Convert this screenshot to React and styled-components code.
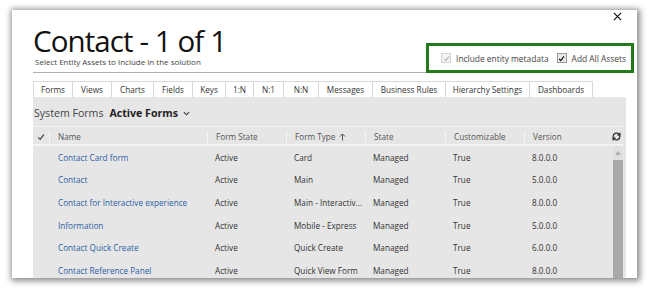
import React from 'react'
import styled, { createGlobalStyle } from 'styled-components'

const Global = createGlobalStyle`
    html, body {
        margin: 0;
        padding: 0;
        background: #fff;
        font-family: "Open Sans", "Noto Sans", sans-serif;
    }
`

const Page = styled.div`
    width: 650px;
    height: 288px;
    padding: 10px 13px 0 12px;
    box-sizing: border-box;
    overflow: hidden;
`

const Window = styled.section`
    height: 268px;
    background: #fff;
    box-shadow: 1px 1px 6px 2px rgba(0, 0, 0, 0.45);
    padding: 0 11px 0 21px;
    box-sizing: border-box;
    display: flex;
    flex-direction: column;
    overflow: hidden;
`

const TopBar = styled.div`
    display: flex;
    justify-content: flex-end;
    height: 12px;
    padding-top: 2px;
    margin-right: 3px;
`

const CloseButton = styled.button`
    border: 0;
    background: none;
    padding: 0;
    width: 10px;
    height: 10px;
    display: flex;
`

const Heading = styled.header`
    display: flex;
    justify-content: space-between;
    align-items: flex-end;
    border-bottom: 1px solid #b0b0b0;
    height: 48px;
    flex-shrink: 0;
`

const TitleBlock = styled.div`
    display: flex;
    flex-direction: column;
    padding-bottom: 5px;
`

const Title = styled.h1`
    margin: 0;
    font-size: 29.5px;
    line-height: 30px;
    letter-spacing: -0.9px;
    font-weight: 400;
    color: #111;
`

const Subtitle = styled.p`
    margin: 1px 0 0 2px;
    font-size: 8px;
    line-height: 10px;
    color: #444;
`

const Highlight = styled.div`
    display: flex;
    align-items: center;
    gap: 5px;
    border: 3px solid #237a1c;
    height: 24px;
    padding: 0 5px 0 12px;
    margin: 0 -8px -1px 0;
    font-size: 8.4px;
    color: #444;
`

const Check = styled.span`
    width: 8px;
    height: 8px;
    border: 1px solid ${({ disabled }) => disabled ? '#d4d4d4' : '#999'};
    background: ${({ disabled }) => disabled ? '#f4f4f4' : '#e8e8e8'};
    display: flex;
    align-items: center;
    justify-content: center;
    margin-left: ${({ gap }) => gap || 0}px;
`

const Tabs = styled.nav`
    display: flex;
    margin-top: 8px;
    height: 16px;
    flex-shrink: 0;
`

const Tab = styled.div`
    height: 16px;
    width: ${({ w }) => w}px;
    box-sizing: border-box;
    border: 1px solid #d8d8d8;
    border-left: ${({ first }) => first ? '1px solid #d8d8d8' : '0'};
    border-bottom: 0;
    font-size: 8.2px;
    color: #333;
    display: flex;
    align-items: center;
    justify-content: center;
    white-space: nowrap;
`

const Content = styled.div`
    flex: 1;
    background: #e6e6e6;
    display: flex;
    flex-direction: column;
    padding-right: 3px;
    min-height: 0;
`

const ViewBar = styled.div`
    height: 26px;
    padding: 3px 0 0 1px;
    flex-shrink: 0;
    display: flex;
    align-items: center;
    gap: 6px;
    font-size: 10.6px;
    color: #444;
`

const ViewName = styled.span`
    font-weight: 700;
    color: #222;
    display: flex;
    align-items: center;
    gap: 5px;
`

const cols = '16px 158px 79px 79px 80px 79px 1fr'

const HeaderRow = styled.div`
    display: grid;
    grid-template-columns: ${cols} 14px;
    height: 15px;
    padding-top: 2px;
    flex-shrink: 0;
    border-top: 1px solid #f2f2f2;
    border-bottom: 2px solid #f4f4f4;
    align-items: center;
    font-size: 8.2px;
    color: #555;
`

const HeadCell = styled.div`
    height: 12px;
    display: flex;
    align-items: center;
    border-left: ${({ first }) => first ? '0' : '1px solid #f6f6f6'};
    gap: 4px;
    justify-content: ${({ center }) => center ? 'center' : 'flex-start'};
    padding-left: ${({ center }) => center ? '0' : '8px'};
`

const Body = styled.div`
    flex: 1;
    display: flex;
    min-height: 0;
`

const Rows = styled.div`
    flex: 1;
`

const Row = styled.div`
    display: grid;
    grid-template-columns: ${cols};
    height: 22.6px;
    align-items: center;
    font-size: 8.2px;
    color: #333;
`

const Cell = styled.div`
    padding-left: ${({ link }) => link ? 9 : 8}px;
    color: ${({ link }) => link ? '#2d5ea6' : '#333'};
    white-space: nowrap;
    overflow: hidden;
`

const Scrollbar = styled.div`
    width: 10px;
    display: flex;
    flex-direction: column;
    background: #e0e0e0;
`

const ScrollArrow = styled.div`
    height: 14px;
    display: flex;
    align-items: center;
    justify-content: center;
`

const Thumb = styled.div`
    flex: 1;
    background: #a9a9a9;
`

const tabs = [
    ['Forms', 40], ['Views', 39], ['Charts', 42], ['Fields', 39], ['Keys', 33],
    ['1:N', 28], ['N:1', 30], ['N:N', 35], ['Messages', 54], ['Business Rules', 73],
    ['Hierarchy Settings', 84], ['Dashboards', 63]
]

const forms = [
    ['Contact Card form', 'Active', 'Card', 'Managed', 'True', '8.0.0.0'],
    ['Contact', 'Active', 'Main', 'Managed', 'True', '5.0.0.0'],
    ['Contact for Interactive experience', 'Active', 'Main - Interactiv...', 'Managed', 'True', '8.0.0.0'],
    ['Information', 'Active', 'Mobile - Express', 'Managed', 'True', '5.0.0.0'],
    ['Contact Quick Create', 'Active', 'Quick Create', 'Managed', 'True', '6.0.0.0'],
    ['Contact Reference Panel', 'Active', 'Quick View Form', 'Managed', 'True', '8.0.0.0']
]

const Tick = ({ color = '#222', size = 7 }) => (
    <svg width={size} height={size} viewBox="0 0 10 10">
        <polyline points="1.5,5.5 4,8 8.5,2" fill="none" stroke={color} strokeWidth="1.6" />
    </svg>
)

const App = () => (
    <Page>
        <Global />
        <Window>
            <TopBar>
                <CloseButton>
                    <svg width="9" height="9" viewBox="0 0 10 10">
                        <path d="M1 1 L9 9 M9 1 L1 9" stroke="#111" strokeWidth="1.3" />
                    </svg>
                </CloseButton>
            </TopBar>
            <Heading>
                <TitleBlock>
                    <Title>Contact - 1 of 1</Title>
                    <Subtitle>Select Entity Assets to Include in the solution</Subtitle>
                </TitleBlock>
                <Highlight>
                    <Check disabled><Tick color="#b5b5b5" /></Check>
                    <span>Include entity metadata</span>
                    <Check gap={3}><Tick color="#111" /></Check>
                    <span>Add All Assets</span>
                </Highlight>
            </Heading>
            <Tabs>
                {tabs.map(([label, w], i) => <Tab key={label} w={w} first={i === 0}>{label}</Tab>)}
            </Tabs>
            <Content>
                <ViewBar>
                    <span>System Forms</span>
                    <ViewName>
                        Active Forms
                        <svg width="7" height="5" viewBox="0 0 8 5">
                            <polyline points="1,1 4,4 7,1" fill="none" stroke="#333" strokeWidth="1.2" />
                        </svg>
                    </ViewName>
                </ViewBar>
                <HeaderRow>
                    <HeadCell first center><Tick color="#444" size={8} /></HeadCell>
                    <HeadCell>Name</HeadCell>
                    <HeadCell>Form State</HeadCell>
                    <HeadCell>
                        Form Type
                        <svg width="7" height="8" viewBox="0 0 8 9">
                            <path d="M4 8.5 V1 M1 4 L4 1 L7 4" fill="none" stroke="#444" strokeWidth="1" />
                        </svg>
                    </HeadCell>
                    <HeadCell>State</HeadCell>
                    <HeadCell>Customizable</HeadCell>
                    <HeadCell>Version</HeadCell>
                    <HeadCell first center>
                        <svg width="9" height="9" viewBox="0 0 24 24" fill="none" stroke="#333" strokeWidth="3.5" strokeLinecap="round" strokeLinejoin="round">
                            <path d="M3 12a9 9 0 0 1 15-6.7L21 8" />
                            <path d="M21 3v5h-5" />
                            <path d="M21 12a9 9 0 0 1-15 6.7L3 16" />
                            <path d="M3 21v-5h5" />
                        </svg>
                    </HeadCell>
                </HeaderRow>
                <Body>
                    <Rows>
                        {forms.map(f => (
                            <Row key={f[0]}>
                                <span />
                                <Cell link>{f[0]}</Cell>
                                {f.slice(1).map((v, i) => <Cell key={i}>{v}</Cell>)}
                            </Row>
                        ))}
                    </Rows>
                    <Scrollbar>
                        <ScrollArrow>
                            <svg width="6" height="4" viewBox="0 0 6 4"><polygon points="0,4 3,0 6,4" fill="#b0b0b0" /></svg>
                        </ScrollArrow>
                        <Thumb />
                    </Scrollbar>
                </Body>
            </Content>
        </Window>
    </Page>
)

export default App
